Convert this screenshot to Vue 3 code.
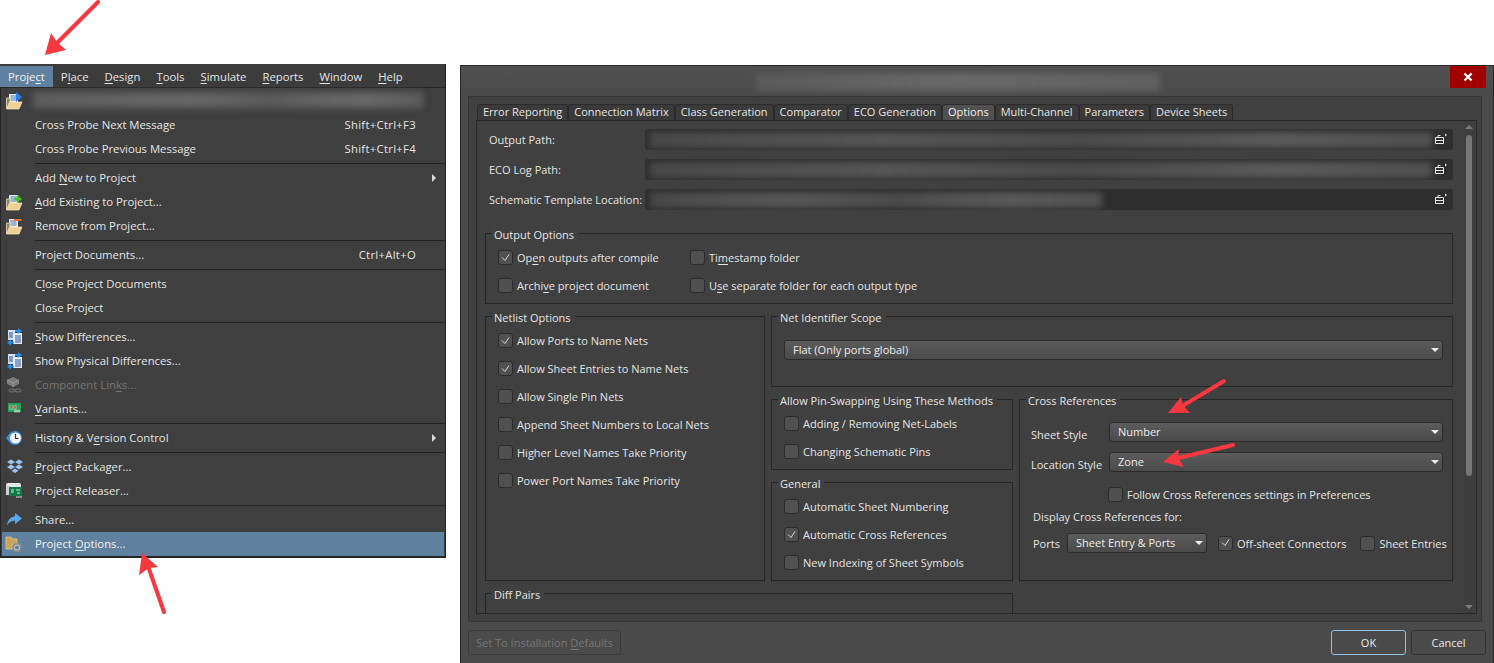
<template>
  <div class="page">
    <div class="menu">
      <div class="menubar">
        <span v-for="(m, i) in menubar" :key="m.text" class="top" :class="{ on: i === 0 }"><Label :text="m.text" /></span>
      </div>
      <div class="drop">
        <template v-for="(row, i) in menu" :key="i">
          <div v-if="row.sep" class="sep"></div>
          <div v-else class="item" :class="{ hi: row.hi, dis: row.dis }">
            <svg v-if="row.icon" class="ico" width="18" height="18" viewBox="0 0 18 18" v-html="icons[row.icon]"></svg>
            <div v-if="row.blur" class="blur menu-blur"></div>
            <span v-else class="lbl"><Label :text="row.text" /></span>
            <span v-if="row.key" class="key">{{ row.key }}</span>
            <span v-if="row.sub" class="sub"></span>
          </div>
        </template>
      </div>
    </div>

    <div class="dialog">
      <div class="titlebar">
        <div class="blur title-blur"></div>
        <div class="close">
          <svg width="10" height="10" viewBox="0 0 10 10"><path d="M1.5 1.5l7 7M8.5 1.5l-7 7" stroke="#fff" stroke-width="2.4" /></svg>
        </div>
      </div>
      <div class="body">
        <div class="tabs">
          <span v-for="t in tabs" :key="t" class="tab" :class="{ on: t === 'Options' }">{{ t }}</span>
        </div>
        <div class="pane">
          <div class="content">
            <div v-for="f in paths" :key="f.label" class="field">
              <label class="field-lbl"><Label :text="f.label" /></label>
              <div class="path">
                <div class="blur path-blur" :style="{ width: f.width }"></div>
                <svg class="browse" width="14" height="12" viewBox="0 0 14 12" fill="none" stroke="#e8e8e8">
                  <path d="M1.5 4.5h8v6h-8zM1.5 7.5h8M4 4.5v-2h2.5" />
                  <path d="M8 2h3.5M11 .5l2 1.5-2 1.5z" fill="#e8e8e8" stroke="none" />
                </svg>
              </div>
            </div>

            <section class="group output">
              <h4>Output Options</h4>
              <div class="output-grid">
                <Check :on="true" text="Op&en outputs after compile" />
                <Check text="Ti&mestamp folder" />
                <Check text="Archi&ve project document" />
                <Check text="U&se separate folder for each output type" />
              </div>
            </section>

            <div class="groups">
              <section class="group netlist">
                <h4>Netlist Options</h4>
                <div class="checks">
                  <Check v-for="c in netlist" :key="c.text" :on="c.on" :text="c.text" />
                </div>
              </section>
              <section class="group scope">
                <h4>Net Identifier Scope</h4>
                <div class="select wide">Flat (Only ports global)</div>
              </section>
              <section class="group pins">
                <h4>Allow Pin-Swapping Using These Methods</h4>
                <div class="checks">
                  <Check text="Adding / Removing Net-Labels" />
                  <Check text="Changing Schematic Pins" />
                </div>
              </section>
              <section class="group general">
                <h4>General</h4>
                <div class="checks">
                  <Check text="Automatic Sheet Numbering" />
                  <Check :on="true" text="Automatic Cross References" />
                  <Check text="New Indexing of Sheet Symbols" />
                </div>
              </section>
              <section class="group cross">
                <h4>Cross References</h4>
                <div class="xrow first"><span class="xlbl">Sheet Style</span><div class="select xsel">Number</div></div>
                <div class="xrow"><span class="xlbl">Location Style</span><div class="select xsel">Zone</div></div>
                <div class="follow"><Check text="Follow Cross References settings in Preferences" /></div>
                <div class="display">Display Cross References for:</div>
                <div class="ports">
                  <span class="ports-lbl">Ports</span>
                  <div class="select ports-sel">Sheet Entry &amp; Ports</div>
                  <Check :on="true" text="Off-sheet Connectors" />
                  <Check text="Sheet Entries" />
                </div>
              </section>
              <section class="group diff">
                <h4>Diff Pairs</h4>
              </section>
            </div>
          </div>
          <div class="scrollbar">
            <i class="sb-up"></i>
            <div class="thumb"></div>
            <i class="sb-down"></i>
          </div>
        </div>
      </div>
      <div class="footer">
        <button class="btn defaults">Set To Installation <u>D</u>efaults</button>
        <div class="right">
          <button class="btn ok">OK</button>
          <button class="btn cancel">Cancel</button>
        </div>
      </div>
    </div>

    <svg class="arrows" width="1494" height="663" viewBox="0 0 1494 663">
      <g v-for="(a, i) in arrows" :key="i">
        <line :x1="a.tail[0]" :y1="a.tail[1]" :x2="a.neck[0]" :y2="a.neck[1]" stroke="#f8373f" stroke-width="4" stroke-linecap="round" />
        <polygon :points="a.head" fill="#f8373f" />
      </g>
    </svg>
  </div>
</template>

<script setup>
import { h } from 'vue';

// "&" marks the access key letter of a label, a plain "& " stays as it is
const Label = (props) => {
  const at = props.text.lastIndexOf('&');
  if (at < 0 || props.text[at + 1] === ' ') return props.text;
  return [props.text.slice(0, at), h('u', props.text[at + 1]), props.text.slice(at + 2)];
};
Label.props = ['text'];

const Check = (props) =>
  h('span', { class: 'check' }, [
    h('span', { class: 'box' }, props.on
      ? [h('svg', { width: 9, height: 8, viewBox: '0 0 9 8' }, [h('path', { d: 'M1 3.5l3 3 4-6', fill: 'none', stroke: '#d8d8d8', 'stroke-width': 1 })])]
      : []),
    h('span', { class: 'check-lbl' }, [h(Label, { text: props.text })]),
  ]);
Check.props = { on: Boolean, text: String };

const menubar = ['Proje&ct', 'P&lace', '&Design', '&Tools', '&Simulate', '&Reports', '&Window', '&Help'].map((text) => ({ text }));

const menu = [
  { blur: true, icon: 'open' },
  { text: 'Cross Probe Next Message', key: 'Shift+Ctrl+F3' },
  { text: 'Cross Probe Previous Message', key: 'Shift+Ctrl+F4' },
  { sep: true },
  { text: 'Add &New to Project', sub: true },
  { text: '&Add Existing to Project...', icon: 'add' },
  { text: 'Remove from Project...', icon: 'remove' },
  { sep: true },
  { text: 'Project Documents...', key: 'Ctrl+Alt+O' },
  { sep: true },
  { text: 'C&lose Project Documents' },
  { text: 'Close Project' },
  { sep: true },
  { text: '&Show Differences...', icon: 'diff' },
  { text: 'Show Physical Differences...', icon: 'diff' },
  { text: 'Component Lin&ks...', icon: 'chip', dis: true },
  { text: '&Variants...', icon: 'pcb' },
  { sep: true },
  { text: 'History & V&ersion Control', icon: 'clock', sub: true },
  { sep: true },
  { text: '&Project Packager...', icon: 'box' },
  { text: 'Project Releaser...', icon: 'release' },
  { sep: true },
  { text: 'Share...', icon: 'share' },
  { text: 'Project &Options...', icon: 'options', hi: true },
];

const folder = '<path d="M.5 6h3.500v10h-3.500z" fill="#94845c" stroke="#e8dcc0" stroke-width=".8"/><path d="M.5 17l3-7h12.500l-3 7z" fill="#efd196" stroke="#f6e8cc" stroke-width=".7"/>';
const sheet = '<rect x="3" y="2" width="9" height="9" fill="#e4ebf4"/><path d="M4.500 4h6M4.500 6h6M4.500 8h6" stroke="#4a7fc0"/>';

const icons = {
  open: sheet + folder + '<path d="M10 0v10l6-5z" fill="#2f7fe8"/>',
  add: sheet + folder + '<path d="M12 2.500v7M8.500 6h7" stroke="#46c01e" stroke-width="2.600"/>',
  remove: sheet + folder + '<path d="M8 3h7.500" stroke="#e8742c" stroke-width="2"/>',
  diff: '<rect x="2" y="2" width="7" height="10" fill="#cfe0f4"/><rect x="7" y="5" width="9" height="11" fill="#e4edf8"/><path d="M3 5h4M3 7h4M3 9h4M9 8h6M9 10h6M9 12h6M9 14h6" stroke="#2c5a92"/><path d="M9 2h4v2H9zM3 13.500h5v2H3z" fill="#2f8fe8"/><path d="M12 0l4 3-4 3zM5 11.500l-4 3 4 3z" fill="#2f8fe8"/>',
  chip: '<path d="M7 1l6 3v4l-6 3-6-3V4z" fill="#7b7b7b"/><path d="M1 4l6 3 6-3M7 7v4" stroke="#9a9a9a" fill="none"/><ellipse cx="6" cy="14.500" rx="3.200" ry="1.500" fill="none" stroke="#777"/><ellipse cx="12" cy="14.500" rx="3.200" ry="1.500" fill="none" stroke="#777"/>',
  pcb: '<rect x="2" y="3" width="13" height="9" fill="#23a35a"/><rect x="3" y="5" width="8" height="5" fill="#5fbf88"/><path d="M4 5.500l3 3M7 5.500l-3 3M8 6l2.500 2.500M10.500 6L8 8.500" stroke="#e04a4a"/><path d="M9 10v2.500M11 10v2.500M13 10v2.500" stroke="#fff"/>',
  clock: '<path d="M0 9l4-4.500v9z" fill="#3f8fe0"/><circle cx="9" cy="9" r="7" fill="#3f8fe0"/><circle cx="9.500" cy="9" r="5.500" fill="#f4f4f4"/><path d="M9.500 5v4.500h3" stroke="#333" fill="none" stroke-width="1.200"/>',
  box: '<path d="M5 1.500l4 2.500-4 2.500L1 4zM13 1.500L17 4l-4 2.500L9 4zM5 6.500L9 9l-4 2.500L1 9zM13 6.500L17 9l-4 2.500L9 9zM9 10.500l3.500 2.200L9 15l-3.500-2.300z" fill="#9cc3f5"/>',
  release: '<path d="M0 3a2 2 0 0 1 2-2h11a2 2 0 0 1 2 2v2H0z" fill="#e6e6e6"/><rect y="4" width="5" height="9" fill="#cfcfcf"/><rect x="3" y="5" width="13" height="9" fill="#0f7a48"/><path d="M5 8h3M5 10h3M10 8h4M11 11h3M11 14v2M13 14v2M15 14v2" stroke="#cfe8d8"/>',
  share: '<path d="M9 2l7 5.500-7 5.500V9.800C5.500 9.800 3 11 1 14.500 1.500 9.500 4 6 9 5.300z" fill="#5aa6ee"/>',
  options: '<path d="M0 2h5l1.500 2H11v5H7v5H0z" fill="#c9a45c" stroke="#e8cf94" stroke-width=".7"/><circle cx="11" cy="12.500" r="4.800" fill="#8d8d8d"/><circle cx="11" cy="12.500" r="2.500" fill="#5f7f9f" stroke="#ddd" stroke-width=".8"/>',
};

const tabs = ['Error Reporting', 'Connection Matrix', 'Class Generation', 'Comparator', 'ECO Generation', 'Options', 'Multi-Channel', 'Parameters', 'Device Sheets'];

const paths = [
  { label: 'Ou&tput Path:', width: '100%' },
  { label: 'ECO Log Path:', width: '100%' },
  { label: 'Schematic Template Location:', width: '56%' },
];

const netlist = [
  { text: 'Allow Ports to Name Nets', on: true },
  { text: 'Allow Sheet Entries to Name Nets', on: true },
  { text: 'Allow Single Pin Nets' },
  { text: 'Append Sheet Numbers to Local Nets' },
  { text: 'Higher Level Names Take Priority' },
  { text: 'Power Port Names Take Priority' },
];

const arrows = [
  { tail: [98, 2], neck: [57, 43], head: '45,55 51,33 57,42 66,50' },
  { tail: [164, 612], neck: [149, 569], head: '142,553 158,567 149,568 139,575' },
  { tail: [1224, 381], neck: [1184, 405], head: '1168,413 1181,397 1183,405 1190,413' },
  { tail: [1233, 445], neck: [1178, 458], head: '1163,462 1179,449 1178,458 1184,467' },
];
</script>

<style>
html, body { margin: 0; background: #fff; }
</style>

<style scoped>
.page {
  position: relative;
  width: 1494px;
  height: 663px;
  display: flex;
  align-items: flex-start;
  gap: 14px;
  padding-top: 64px;
  box-sizing: border-box;
  overflow: hidden;
  font-family: "Open Sans", "Noto Sans", sans-serif;
  font-size: 11px;
  color: #e4e4e4;
}
.page :deep(u), u { text-underline-offset: 2px; text-decoration-thickness: 1px; }

.menu {
  width: 446px;
  flex: none;
  background: #3f3f3f;
  box-sizing: border-box;
  border: 1px solid #262626;
  border-top: 0;
  border-bottom-width: 2px;
  font-size: 11.3px;
}
.menubar {
  display: flex;
  align-items: stretch;
  padding-top: 2px;
  box-sizing: border-box;
  height: 24px;
  margin-left: -1px;
  background: #3c3c3c;
  border-bottom: 1px solid #262626;
}
.top { padding: 0 8px; line-height: 21px; }
.top.on { background: #5f819f; color: #f2f2f2; }
.drop { padding-top: 1px; }
.item {
  position: relative;
  height: 24px;
  box-sizing: border-box;
  display: flex;
  align-items: center;
  padding: 0 29px 2px 34px;
}
.item.hi { background: #5f819f; color: #f2f2f2; margin: 0 1px; padding-left: 33px; padding-right: 28px; }
.item.dis { color: #767676; }
.ico { position: absolute; left: 5px; top: 3px; overflow: visible; }
.item.hi .ico { left: 4px; }
.lbl { white-space: pre; }
.key { margin-left: auto; letter-spacing: .3px; }
.sub {
  position: absolute;
  right: 9px;
  top: 8px;
  border-left: 4px solid #d8d8d8;
  border-top: 4px solid transparent;
  border-bottom: 4px solid transparent;
}
.sep { height: 1px; margin: 2px 0 2px 34px; background: #232323; }
.blur { filter: blur(3px); }
.menu-blur {
  position: absolute;
  left: 32px;
  right: 22px;
  top: 3px;
  height: 16px;
  background: linear-gradient(90deg, #5c5c5c, #666 40%, #5a5a5a 60%, #686868 85%, #5a5a5a);
}

.dialog {
  flex: none;
  width: 1034px;
  height: 599px;
  margin-top: 1px;
  box-sizing: border-box;
  background: #4a4a4a;
  border: 1px solid #262626;
  display: flex;
  flex-direction: column;
}
.titlebar {
  height: 30px;
  flex: none;
  position: relative;
  display: flex;
  justify-content: flex-end;
  padding-right: 7px;
  background: linear-gradient(#505050, #4a4a4a);
}
.title-blur {
  position: absolute;
  left: 295px;
  top: 7px;
  width: 404px;
  height: 18px;
  background: linear-gradient(90deg, #5a5a5a, #686868 50%, #5f5f5f);
}
.close {
  width: 36px;
  height: 22px;
  background: #a00000;
  display: flex;
  align-items: center;
  justify-content: center;
}
.body {
  margin: 0 11px 0 7px;
  height: 526px;
  flex: none;
  box-sizing: border-box;
  background: #404040;
  border: 1px solid #363636;
  padding: 7px 4px 7px 7px;
  display: flex;
  flex-direction: column;
}
.tabs { display: flex; height: 16px; flex: none; padding-left: 1px; }
.tab {
  height: 16px;
  line-height: 13px;
  box-sizing: border-box;
  padding: 0 5px;
  background: #3a3a3a;
  border: 1px solid #2b2b2b;
  border-bottom: 0;
  border-radius: 3px 3px 0 0;
  white-space: nowrap;
}
.tab.on { background: #505050; color: #eee; }
.pane {
  flex: 1;
  min-height: 0;
  border: 1px solid #272727;
  display: flex;
  overflow: hidden;
}
.content {
  flex: 1;
  min-width: 0;
  padding: 7px 10px 0 8px;
}
.field { display: flex; align-items: center; height: 22px; margin-bottom: 8px; }
.field-lbl { width: 160px; flex: none; padding-left: 4px; box-sizing: border-box; white-space: nowrap; }
.path {
  flex: 1;
  height: 21px;
  position: relative;
  overflow: hidden;
  background: #2e2e2e;
  border-radius: 3px;
  display: flex;
  align-items: center;
  justify-content: flex-end;
  padding-right: 5px;
}
.path-blur {
  position: absolute;
  left: 5px;
  top: 3px;
  height: 16px;
  max-width: calc(100% - 26px);
  background: linear-gradient(90deg, #484848, #565656 30%, #4a4a4a 55%, #5a5a5a 80%, #505050);
}
.browse { position: relative; }

.group {
  border: 1px solid #262626;
  box-sizing: border-box;
  margin: 0;
  min-width: 0;
}
.group h4 {
  margin: -6px 0 0 6px;
  padding: 0 4px 0 2px;
  width: fit-content;
  background: #404040;
  font: inherit;
  line-height: 14px;
  white-space: nowrap;
}
.output { height: 71px; margin-top: 23px; }
.output-grid {
  display: grid;
  grid-template-columns: 192px 1fr;
  row-gap: 13px;
  padding: 8px 0 0 12px;
}
.page :deep(.check) { display: inline-flex; align-items: center; gap: 4px; height: 15px; white-space: nowrap; }
.page :deep(.box) {
  width: 13px;
  height: 13px;
  flex: none;
  background: #505050;
  border: 1px solid #2b2b2b;
  border-radius: 3px;
  display: flex;
  align-items: center;
  justify-content: center;
}
.checks { display: flex; flex-direction: column; align-items: flex-start; gap: 13px; padding: 8px 0 0 12px; }
.groups {
  display: grid;
  grid-template-columns: 280px 242px 1fr;
  grid-template-rows: 71px 71px 99px 40px;
  column-gap: 6px;
  row-gap: 12px;
  margin-top: 12px;
}
.netlist { grid-column: 1; grid-row: 1 / 4; }
.scope { grid-column: 2 / 4; grid-row: 1; }
.pins { grid-column: 2; grid-row: 2; }
.general { grid-column: 2; grid-row: 3; }
.cross { grid-column: 3; grid-row: 2 / 4; }
.diff { grid-column: 1 / 3; grid-row: 4; }
.pins .checks, .general .checks { padding-top: 8px; }

.select {
  position: relative;
  height: 20px;
  line-height: 17px;
  box-sizing: border-box;
  padding-left: 8px;
  background: linear-gradient(#5c5c5c, #4a4a4a);
  border: 1px solid #2b2b2b;
  border-radius: 3px;
  color: #ececec;
}
.select::after {
  content: "";
  position: absolute;
  right: 3px;
  top: 7px;
  border-top: 4px solid #eee;
  border-left: 4px solid transparent;
  border-right: 4px solid transparent;
}
.wide { margin: 15px 9px 0 12px; }
.xrow { display: flex; align-items: center; height: 20px; margin: 10px 9px 0 11px; }
.xrow.first { margin-top: 14px; }
.xlbl { width: 78px; flex: none; position: relative; top: 2px; }
.xsel { flex: 1; }
.follow { margin: 15px 0 0 88px; line-height: 15px; display: flex; }
.display { margin: 7px 0 0 13px; line-height: 16px; }
.ports { display: flex; align-items: center; margin: 8px 0 0 13px; }
.ports-lbl { width: 34px; flex: none; }
.ports-sel { width: 140px; flex: none; margin-right: 11px; }
.ports :deep(.check + .check) { margin-left: 14px; }

.scrollbar { width: 12px; flex: none; position: relative; margin-right: 1px; background: #3e3e3e; }
.sb-up, .sb-down { position: absolute; left: 2px; border-left: 4px solid transparent; border-right: 4px solid transparent; }
.sb-up { top: 4px; border-bottom: 4px solid #7a7a7a; }
.sb-down { bottom: 4px; border-top: 4px solid #7a7a7a; }
.thumb { position: absolute; left: 3px; top: 14px; width: 6px; height: 341px; background: #777; border-radius: 3px; }

.footer {
  flex: 1;
  display: flex;
  align-items: center;
  justify-content: space-between;
  padding: 0 7px 0 7px;
}
.btn {
  font: inherit;
  height: 25px;
  box-sizing: border-box;
  background: #4a4a4a;
  border: 1px solid #333;
  border-radius: 3px;
  color: #e8e8e8;
  padding: 0;
}
.defaults { width: 153px; color: #777; border-color: #3a3a3a; }
.right { display: flex; gap: 5px; }
.ok { width: 75px; border-color: #8fc0e6; }
.cancel { width: 75px; }
.arrows { position: absolute; left: 0; top: 0; pointer-events: none; }
</style>
